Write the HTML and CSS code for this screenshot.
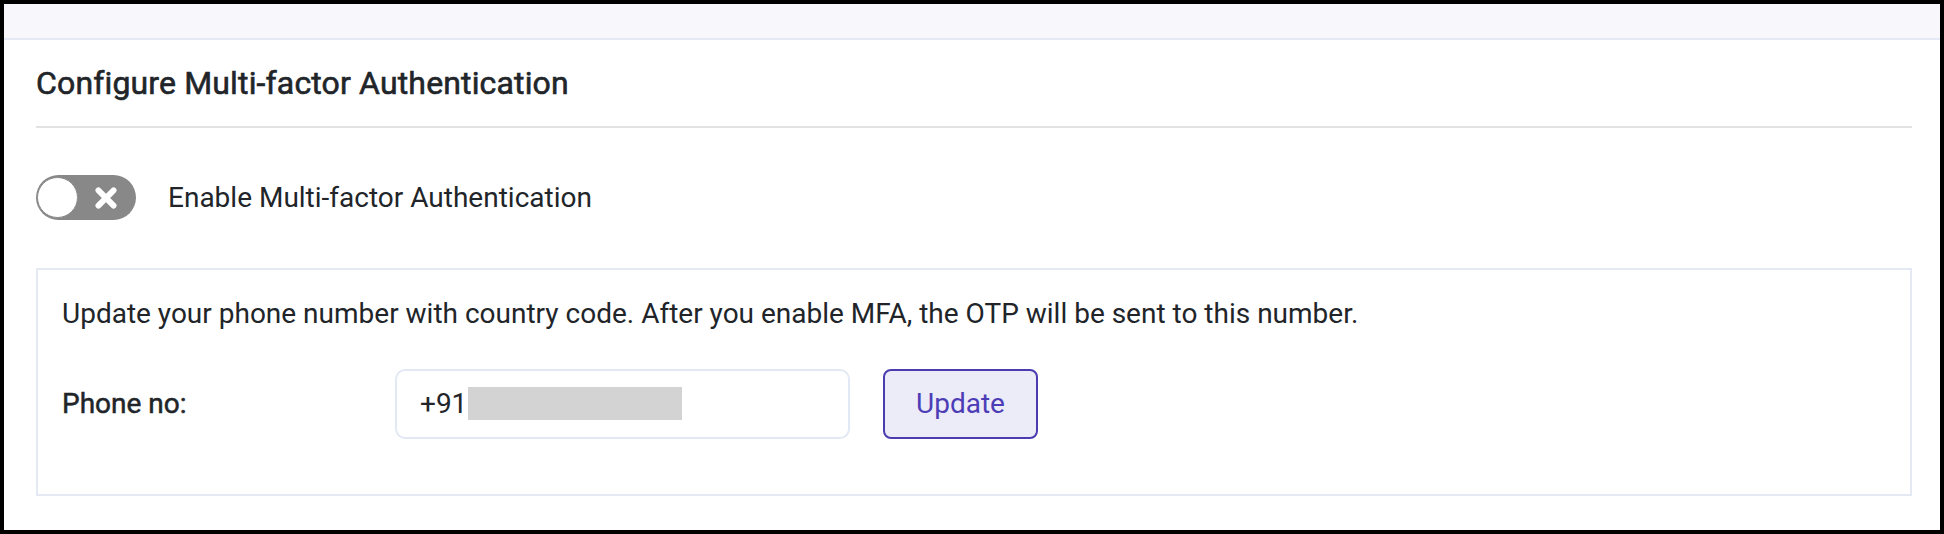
FILE: index.html
```html
<!DOCTYPE html>
<html lang="en">
<head>
<meta charset="utf-8">
<title>Configure Multi-factor Authentication</title>
<link rel="stylesheet" href="styles.css">
</head>
<body>
<div class="page">
  <div class="topbar"></div>
  <div class="panel">
    <h2 class="title">Configure Multi-factor Authentication</h2>
    <div class="divider"></div>
    <div class="toggle-row">
      <span class="toggle">
        <span class="knob"></span>
        <svg class="toggle-x" viewBox="0 0 24 24" width="26" height="26" aria-hidden="true">
          <path d="M5 5 L19 19 M19 5 L5 19" stroke="#fff" stroke-width="5.4" stroke-linecap="round" fill="none"/>
        </svg>
      </span>
      <span class="toggle-label">Enable Multi-factor Authentication</span>
    </div>
    <div class="box">
      <p class="note">Update your phone number with country code. After you enable MFA, the OTP will be sent to this number.</p>
      <div class="phone-row">
        <label class="phone-label">Phone no:</label>
        <div class="phone-input"><span class="prefix">+91</span><span class="redact"></span></div>
        <button class="update-btn" type="button">Update</button>
      </div>
    </div>
  </div>
</div>
</body>
</html>
```

FILE: styles.css
```css
* { box-sizing: border-box; }
html, body { margin: 0; padding: 0; }
body {
  background: #000;
  width: 1944px;
  height: 534px;
  padding: 4px;
  font-family: Roboto, "Liberation Sans", Arial, sans-serif;
  color: #212529;
  overflow: hidden;
}
.page {
  width: 1936px;
  height: 526px;
  background: #fff;
  display: flex;
  flex-direction: column;
}
.topbar {
  height: 36px;
  background: #f7f7fc;
  border-bottom: 2px solid #e5e8f5;
  flex: none;
}
.panel {
  flex: 1;
  padding: 24px 28px 0 32px;
  border-top-right-radius: 4px;
}
.title {
  margin: 0;
  font-size: 32px;
  font-weight: 400;
  -webkit-text-stroke: 0.6px #212529;
  letter-spacing: 0.15px;
  line-height: 1.2;
  color: #212529;
}
.divider {
  margin-top: 24px;
  height: 2px;
  background: #e2e2e2;
}
.toggle-row {
  margin-top: 47px;
  display: flex;
  align-items: center;
  gap: 32px;
}
.toggle {
  position: relative;
  width: 100px;
  height: 45px;
  border-radius: 23px;
  background: #888888;
  flex: none;
}
.knob {
  position: absolute;
  left: 1px;
  top: 2px;
  width: 41px;
  height: 41px;
  border-radius: 50%;
  background: #fff;
  border: 1.5px solid #8a8a8a;
}
.toggle-x {
  position: absolute;
  left: 57px;
  top: 9.5px;
}
.toggle-label {
  font-size: 28px;
  line-height: 1.2;
}
.box {
  margin-top: 48px;
  border: 2px solid #e4e9f3;
  padding: 28px 24px 55px 24px;
}
.note {
  margin: 0;
  font-size: 28px;
  line-height: 1.15;
}
.phone-row {
  margin-top: 38px;
  display: flex;
  align-items: center;
}
.phone-label {
  width: 333px;
  font-size: 28px;
  font-weight: 400;
  -webkit-text-stroke: 0.5px #212529;
}
.phone-input {
  width: 455px;
  height: 70px;
  border: 2px solid #e3e9f4;
  border-radius: 10px;
  display: flex;
  align-items: center;
  padding-left: 23px;
}
.prefix {
  font-size: 28px;
}
.redact {
  width: 214px;
  height: 33px;
  background: #d3d3d3;
  margin-left: 1px;
}
.update-btn {
  margin-left: 33px;
  width: 155px;
  height: 70px;
  border: 2px solid #4b3bb0;
  border-radius: 8px;
  background: #ecebf8;
  color: #4c3db6;
  font-family: Roboto, "Liberation Sans", Arial, sans-serif;
  font-size: 28px;
  padding: 0;
}
```
